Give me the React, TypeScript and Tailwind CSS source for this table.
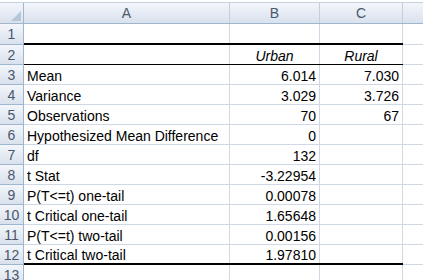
import React from 'react';

type Row = {
  label?: string;
  b?: string;
  c?: string;
  italic?: boolean;
  border?: 'thick' | 'thin';
};

const rows: Row[] = [
  { border: 'thick' },
  { b: 'Urban', c: 'Rural', italic: true, border: 'thin' },
  { label: 'Mean', b: '6.014', c: '7.030' },
  { label: 'Variance', b: '3.029', c: '3.726' },
  { label: 'Observations', b: '70', c: '67' },
  { label: 'Hypothesized Mean Difference', b: '0' },
  { label: 'df', b: '132' },
  { label: 't Stat', b: '-3.22954' },
  { label: 'P(T<=t) one-tail', b: '0.00078' },
  { label: 't Critical one-tail', b: '1.65648' },
  { label: 'P(T<=t) two-tail', b: '0.00156' },
  { label: 't Critical two-tail', b: '1.97810', border: 'thick' },
  {},
];

const header = 'bg-gradient-to-b from-[#f3f6fb] to-[#d9e1ed] text-[#4a576a]';

const App = () => {
  return (
    <div
      className="w-[423px] h-[280px] overflow-hidden bg-white text-[14px] leading-[16px] text-black"
      style={{ fontFamily: '"Liberation Sans", Arial, sans-serif' }}
    >
      <div className="h-[3px] bg-white border-b border-[#c5d2e2]" />
      <div className="flex h-[21px] border-b border-[#9eb6ce]">
        <div className={`w-[24px] shrink-0 border-r border-[#9eb6ce] relative ${header}`}>
          <div className="absolute right-[2px] bottom-[2px] w-0 h-0 border-l-[10px] border-l-transparent border-b-[10px] border-b-[#b6c6d9]" />
        </div>
        <div className={`w-[206px] shrink-0 border-r border-[#c0cedd] flex items-center justify-center ${header}`}>A</div>
        <div className={`w-[90px] shrink-0 border-r border-[#c0cedd] flex items-center justify-center ${header}`}>B</div>
        <div className={`w-[83px] shrink-0 border-r border-[#c0cedd] flex items-center justify-center ${header}`}>C</div>
        <div className={`flex-1 ${header}`} />
      </div>
      {rows.map((r, i) => (
        <div key={i} className={`flex ${i === 0 ? 'h-[21px]' : 'h-[20px]'}`}>
          <div className={`w-[24px] shrink-0 border-r border-b border-[#9eb6ce] flex items-center justify-center ${header}`}>
            {i + 1}
          </div>
          <div
            className={`flex shrink-0 ${
              r.border === 'thick'
                ? 'border-b-2 border-black'
                : r.border === 'thin'
                ? 'border-b border-black'
                : ''
            }`}
          >
            <div
              className={`w-[206px] border-r border-[#d0d7e5] ${
                r.border ? '' : 'border-b'
              } overflow-hidden whitespace-nowrap flex items-end pl-[3px]`}
            >
              {r.label}
            </div>
            <div
              className={`w-[90px] border-r border-[#d0d7e5] ${r.border ? '' : 'border-b'} flex items-end ${
                r.italic ? 'justify-center italic' : 'justify-end pr-[3px]'
              }`}
            >
              {r.b}
            </div>
            <div
              className={`w-[83px] border-r border-[#d0d7e5] ${r.border ? '' : 'border-b'} flex items-end ${
                r.italic ? 'justify-center italic' : 'justify-end pr-[3px]'
              }`}
            >
              {r.c}
            </div>
          </div>
          <div className="flex-1 border-b border-[#d0d7e5]" />
        </div>
      ))}
    </div>
  );
};

export default App;
